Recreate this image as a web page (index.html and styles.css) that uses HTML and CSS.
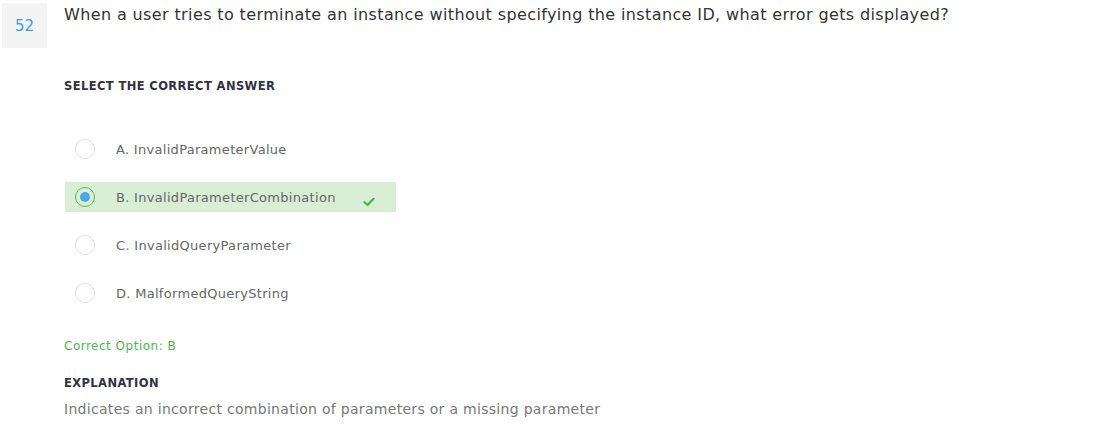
FILE: index.html
```html
<!DOCTYPE html>
<html>
<head>
<meta charset="utf-8">
<link rel="stylesheet" href="styles.css">
</head>
<body>
<div class="question">
  <div class="q-head">
    <div class="q-num">52</div>
    <div class="q-title">When a user tries to terminate an instance without specifying the instance ID, what error gets displayed?</div>
  </div>
  <div class="q-body">
    <div class="label">SELECT THE CORRECT ANSWER</div>
    <ul class="options">
      <li class="option"><span class="radio"></span><span class="opt-text">A. InvalidParameterValue</span></li>
      <li class="option selected"><span class="radio"><span class="dot"></span></span><span class="opt-text">B. InvalidParameterCombination</span>
        <svg class="check" width="12" height="10" viewBox="0 0 12 10"><path d="M1.5 5.2 L4.6 8 L10.5 1.8" fill="none" stroke="#4caf50" stroke-width="2.2" stroke-linecap="round" stroke-linejoin="round"/></svg>
      </li>
      <li class="option"><span class="radio"></span><span class="opt-text">C. InvalidQueryParameter</span></li>
      <li class="option"><span class="radio"></span><span class="opt-text">D. MalformedQueryString</span></li>
    </ul>
    <div class="correct">Correct Option: B</div>
    <div class="label expl-label">EXPLANATION</div>
    <div class="expl">Indicates an incorrect combination of parameters or a missing parameter</div>
  </div>
</div>
</body>
</html>
```

FILE: styles.css
```css
html, body {
  margin: 0;
  padding: 0;
  background: #fff;
}
body {
  font-family: "DejaVu Sans", "Open Sans", sans-serif;
  color: #333;
}
.q-head {
  display: flex;
  align-items: flex-start;
}
.q-num {
  width: 45px;
  height: 45px;
  margin: 3px 17px 0 2px;
  background: #f4f4f4;
  color: #3d9be9;
  font-size: 15px;
  display: flex;
  align-items: center;
  justify-content: center;
  flex-shrink: 0;
}
.q-title {
  font-size: 16px;
  letter-spacing: 0.38px;
  line-height: 20px;
  margin-top: 5px;
  color: #333;
}
.q-body {
  padding-left: 64px;
}
.label {
  font-size: 11.5px;
  font-weight: bold;
  letter-spacing: 0.4px;
  color: #2f3440;
  margin-top: 30px;
  line-height: 16px;
}
.options {
  list-style: none;
  margin: 40px 0 0 0;
  padding: 0;
}
.option {
  display: flex;
  align-items: center;
  width: 321px;
  height: 30px;
  margin-left: 1px;
  padding-left: 10px;
  margin-bottom: 18px;
}
.option.selected {
  background: #d8eed5;
}
.radio {
  width: 18px;
  height: 18px;
  border: 1px solid #e0e0e0;
  border-radius: 50%;
  box-sizing: content-box;
  display: flex;
  align-items: center;
  justify-content: center;
  flex-shrink: 0;
  background: #fff;
}
.selected .radio {
  border-color: #5cb85c;
  background: transparent;
}
.dot {
  width: 10px;
  height: 10px;
  border-radius: 50%;
  background: #4aa8e8;
}
.opt-text {
  margin-left: 21px;
  font-size: 13px;
  letter-spacing: 0.3px;
  color: #666;
}
.check {
  margin-left: 27px;
  margin-top: 9px;
}
.correct {
  margin-top: 30px;
  font-size: 12px;
  letter-spacing: 0.5px;
  color: #4cb84c;
  line-height: 16px;
}
.expl-label {
  margin-top: 21px;
}
.expl {
  margin-top: 9px;
  font-size: 14px;
  letter-spacing: 0.3px;
  color: #777;
  line-height: 18px;
}
```
